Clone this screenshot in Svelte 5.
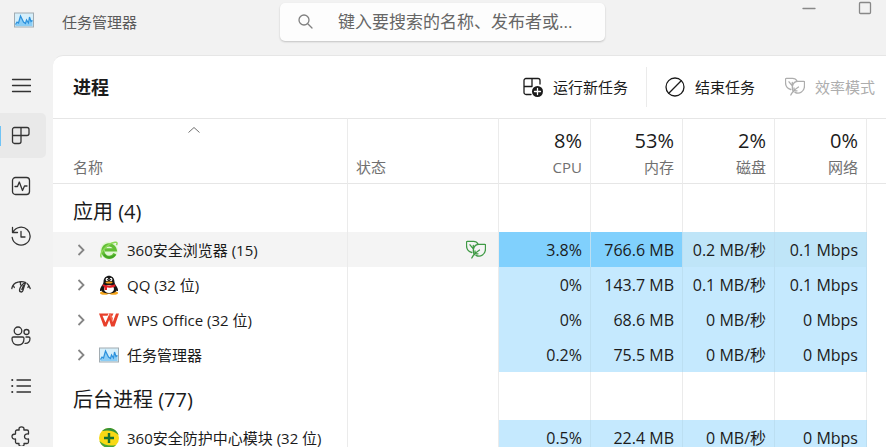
<script>
  let query = $state('');
  let activePage = $state('processes');

  const pages = [
    { id: 'processes', label: '进程' },
    { id: 'performance', label: '性能' },
    { id: 'history', label: '应用历史记录' },
    { id: 'startup', label: '启动应用' },
    { id: 'users', label: '用户' },
    { id: 'details', label: '详细信息' },
    { id: 'services', label: '服务' }
  ];

  const totals = [
    { label: 'CPU', value: '8%' },
    { label: '内存', value: '53%' },
    { label: '磁盘', value: '2%' },
    { label: '网络', value: '0%' }
  ];

  const groups = [
    {
      title: '应用 (4)',
      rows: [
        {
          icon: 'browser',
          name: '360安全浏览器 (15)',
          efficient: true,
          hovered: true,
          usage: ['3.8%', '766.6 MB', '0.2 MB/秒', '0.1 Mbps'],
          heat: ['high', 'high', 'low', 'low']
        },
        { icon: 'qq', name: 'QQ (32 位)', usage: ['0%', '143.7 MB', '0.1 MB/秒', '0.1 Mbps'] },
        { icon: 'wps', name: 'WPS Office (32 位)', usage: ['0%', '68.6 MB', '0 MB/秒', '0 Mbps'] },
        { icon: 'taskmgr', name: '任务管理器', usage: ['0.2%', '75.5 MB', '0 MB/秒', '0 Mbps'] }
      ]
    },
    {
      title: '后台进程 (77)',
      rows: [
        {
          icon: 'shield',
          name: '360安全防护中心模块 (32 位)',
          single: true,
          usage: ['0.5%', '22.4 MB', '0 MB/秒', '0 Mbps']
        }
      ]
    }
  ];
</script>

{#snippet leaf()}
  <svg class="icon" viewBox="0 0 20 20" aria-hidden="true">
    <path d="M5.800 12.500C2 11.500.5 8.500.5 5.500V2.200c0-.5.3-.8.8-.8h6.200c2 0 3.600.8 4.500 2.600" />
    <path d="M8.300 14.600C6.600 11.500 6.800 4.300 13 4.300h5.700c.5 0 .8.300.8.800v3.400c0 6-5 9.200-9.500 6.900" />
    <path d="M5.800 18c1.500-3.200 4-5.600 7.700-8M4 4.800l3.300 4M7.300 5.500v3.300M9 11v2.800h3" />
  </svg>
{/snippet}

{#snippet appIcon(kind)}
  <svg class="app-icon" viewBox="0 0 20 20" aria-hidden="true">
    {#if kind === 'browser'}
      <circle cx="10" cy="10.500" r="9" fill="#e2f6d5" />
      <path d="M15.800 13.600A6.200 6.200 0 1 1 16.200 9.800H6" fill="none" stroke="#62bf35" stroke-width="3.200" />
      <path d="M5 14.500c2.500 4 8 4 11 .3" fill="none" stroke="#43a526" stroke-width="2" />
      <path d="M2.500 17.500C-.5 14 8 3.500 16 2.200c2.500-.4 2.300 1.300 1.500 3" fill="none" stroke="#8bd956" stroke-width="1.500" />
    {:else if kind === 'qq'}
      <ellipse cx="5.500" cy="18" rx="4.500" ry="1.800" fill="#f6a51b" />
      <ellipse cx="14.500" cy="18" rx="4.500" ry="1.800" fill="#f6a51b" />
      <path d="M4.500 7C4.500-1.500 15.500-1.500 15.500 7c0 2 1.500 3 3 6 1 2.500.5 4-1 2.500-1 4-14 4-15 0C1 17 .5 15.500 1.500 13c1.500-3 3-4 3-6z" fill="#171717" />
      <ellipse cx="10" cy="14" rx="5" ry="4" fill="#fff" />
      <ellipse cx="8" cy="4.500" rx="1.300" ry="1.800" fill="#fff" />
      <ellipse cx="12" cy="4.500" rx="1.300" ry="1.800" fill="#fff" />
      <circle cx="8.400" cy="4.700" r=".6" fill="#111" />
      <circle cx="11.600" cy="4.700" r=".6" fill="#111" />
      <ellipse cx="10" cy="7.500" rx="3.500" ry="1.100" fill="#f6a51b" />
      <path d="M4 9.200c4 1.800 8 1.800 12 0l.6 2c-3 1.500-6 1.700-8.600 1.400V15H5.500v-3.300L3.400 11z" fill="#e52025" />
    {:else if kind === 'wps'}
      <path d="M0 3.500h9.500l-1 2.200H3.500l3 6.800L10.500 3.500h4l-1.200 2.400H12l1.800 6L17 3.500h3L15.500 16.500h-3.300L10.200 10 7.500 16.500H4.800z" fill="#e8402b" />
      <path d="M9.500 3.500h2L14 8.500l-1 3z" fill="#f4674f" />
    {:else if kind === 'shield'}
      <circle cx="10" cy="10" r="10" fill="#f7d915" />
      <path d="M3 3C8-2 17-.5 19.500 7 15 2.500 9 1.800 3 3z" fill="#35933a" />
      <path d="M17 17C12 22 3 20.500.5 13 5 17.500 11 18.200 17 17z" fill="#45a33c" />
      <path d="M8.800 5h2.400v3.800H15v2.400h-3.800V15H8.800v-3.800H5V8.800h3.800z" fill="#157030" />
    {:else}
      <rect x=".5" y="3" width="19" height="14" fill="#d5effb" stroke="#a2acb2" />
      <path d="M1.500 14.500 3 12l1.500 1L6.500 6l3 6 2 1.500 1-3.500 2 3L15.500 7l1.500 4.500 1.500-1V16h-17z" fill="#8bcdf5" />
      <path d="M1.500 14.500 3 12l1.500 1L6.500 6l3 6 2 1.500 1-3.500 2 3L15.500 7l1.500 4.500 1.500-1" fill="none" stroke="#2b91dc" stroke-width="1.200" />
    {/if}
  </svg>
{/snippet}

{#snippet pageIcon(id)}
  <svg class="icon" viewBox="0 0 20 20" aria-hidden="true">
    {#if id === 'processes'}
      <path d="M3.500 1.500H16a2 2 0 0 1 2 2v4a2 2 0 0 1-2 2H10v6a2 2 0 0 1-2 2H3.500a2 2 0 0 1-2-2v-12a2 2 0 0 1 2-2zM10 1.500v8M1.500 9.500H10" />
    {:else if id === 'performance'}
      <rect x="1.500" y="1.500" width="17" height="17" rx="3" />
      <path d="M4 10.500h2.500L8.300 6l3.200 8.500 2-4.500H16" />
    {:else if id === 'history'}
      <path d="M1.500 1.500v5h5M2 6.200A9 9 0 1 1 1.200 11.500M10 5.500v5.500h4" />
    {:else if id === 'startup'}
      <path d="M.8 12.500C1.500 9 4 6.800 7 6.200M3.300 11.500 2.300 9.500M8 6c2.300-.6 4.600-.3 6.700.6M19.200 12.500c-.5-2.300-1.700-3.800-3.200-5M16.900 11.500l1-2" />
      <path d="M14.500 6.500c-3.200 1.500-5.200 4-5.900 7-.5 2.800 2.800 3.400 3.400.9.500-2.300 1.500-4.800 2.500-7.900zM9.500 6.200v2.600M12.500 9.500l-1.700 4" />
    {:else if id === 'users'}
      <circle cx="7" cy="4.800" r="3.800" />
      <circle cx="15.500" cy="6" r="2.500" />
      <path d="M2.500 11h9c1 0 1.500.6 1.500 1.500 0 4-2.200 6.500-6 6.500S1 16.500 1 12.500c0-.9.500-1.500 1.500-1.500zM15 11h2.500c1 0 1.500.5 1.500 1.500 0 3.200-2 5.200-5 4.900" />
    {:else if id === 'details'}
      <path d="M6 4h13.500M6 10h13.500M6 16h13.500" />
      <path class="dots" d="M1.200 4h.1M1.200 10h.1M1.200 16h.1" />
    {:else}
      <path d="M6 4h2.200C7.500 1.600 9 .8 10.500.8S13.500 1.600 12.800 4H16a1.500 1.500 0 0 1 1.500 1.500V8c-3-.5-4 1-4 2.500s1 3 4 2.500v3A1.500 1.500 0 0 1 16 17.500h-3c.5 2.200-1 3-2.500 3s-3-.8-2.500-3H6A1.500 1.500 0 0 1 4.500 16v-3C2 13.300 1 12 1 10.500S2 8 4.500 8V5.500A1.500 1.500 0 0 1 6 4z" />
    {/if}
  </svg>
{/snippet}

<div class="window">
  <header class="titlebar">
    <div class="brand">
      {@render appIcon('taskmgr')}
      <span>任务管理器</span>
    </div>
    <label class="search">
      <svg class="icon" viewBox="0 0 20 20" aria-hidden="true">
        <circle cx="8" cy="8" r="5" />
        <path d="m12 12 4 4" />
      </svg>
      <input type="text" aria-label="搜索" placeholder="键入要搜索的名称、发布者或..." bind:value={query} />
    </label>
    <div class="window-controls">
      <button aria-label="最小化">
        <svg class="icon" viewBox="0 0 20 20"><path d="M4 10.500h12" /></svg>
      </button>
      <button aria-label="最大化">
        <svg class="icon" viewBox="0 0 20 20"><rect x="4.500" y="4.500" width="11" height="11" rx="1" /></svg>
      </button>
    </div>
  </header>

  <div class="body">
    <nav class="sidebar">
      <button aria-label="打开导航">
        <svg class="icon" viewBox="0 0 20 20"><path d="M1.500 3.500h18M1.500 9.500h18M1.500 15.500h18" /></svg>
      </button>
      {#each pages as page}
        <button
          class:active={page.id === activePage}
          aria-label={page.label}
          onclick={() => (activePage = page.id)}
        >
          {@render pageIcon(page.id)}
        </button>
      {/each}
    </nav>

    <main class="panel">
      <div class="toolbar">
        <h1>进程</h1>
        <button class="action">
          <svg class="icon" viewBox="0 0 20 20" aria-hidden="true">
            <path d="M8 17.500H3a2 2 0 0 1-2-2v-12a2 2 0 0 1 2-2h12a2 2 0 0 1 2 2V7M9 1.500v8M1 9.500h8" />
            <circle class="solid" cx="14.500" cy="14.500" r="5.500" />
            <path class="plus" d="M14.500 11.500v6M11.500 14.500h6" />
          </svg>
          运行新任务
        </button>
        <span class="divider"></span>
        <button class="action">
          <svg class="icon" viewBox="0 0 20 20" aria-hidden="true">
            <circle cx="10" cy="10" r="9" />
            <path d="M16.200 3.800 3.800 16.200" />
          </svg>
          结束任务
        </button>
        <button class="action efficiency" disabled>
          {@render leaf()}
          效率模式
        </button>
      </div>

      <table>
        <colgroup>
          <col class="col-name" />
          <col class="col-status" />
          {#each totals as total}
            <col class="col-usage" />
          {/each}
          <col />
        </colgroup>
        <thead>
          <tr>
            <th class="name-head">
              <button class="sort">
                <svg class="caret" viewBox="0 0 12 6" aria-hidden="true"><path d="m.5 5.500 5.500-5 5.500 5" /></svg>
                <span>名称</span>
              </button>
            </th>
            <th>状态</th>
            {#each totals as total}
              <th class="usage">
                <strong>{total.value}</strong>
                {total.label}
              </th>
            {/each}
            <td></td>
          </tr>
        </thead>
        {#each groups as group}
          <tbody>
            <tr class="group">
              <th scope="rowgroup">{group.title}</th>
              <td></td>
              {#each totals as total}
                <td></td>
              {/each}
              <td></td>
            </tr>
            {#each group.rows as row}
              <tr class="process" class:hovered={row.hovered}>
                <td>
                  <div class="process-name">
                    {#if row.single}
                      <span class="expand"></span>
                    {:else}
                      <button class="expand" aria-label="展开">
                        <svg viewBox="0 0 8 12"><path d="m1.500 1 5 5-5 5" /></svg>
                      </button>
                    {/if}
                    {@render appIcon(row.icon)}
                    <span>{row.name}</span>
                  </div>
                </td>
                <td class="status">
                  {#if row.efficient}
                    {@render leaf()}
                  {/if}
                </td>
                {#each row.usage as value, i}
                  <td class="usage {row.heat ? row.heat[i] : 'low'}">{value}</td>
                {/each}
                <td></td>
              </tr>
            {/each}
          </tbody>
        {/each}
      </table>
    </main>
  </div>
</div>

<style>
  :global(body) {
    background: #f2f2f2;
  }

  .window {
    display: flex;
    flex-direction: column;
    height: 100vh;
    overflow: hidden;
    font-family: "Open Sans", "Noto Sans CJK SC", sans-serif;
    font-size: 15px;
    line-height: 20px;
    color: #1b1b1b;
  }

  button {
    display: flex;
    align-items: center;
    padding: 0;
    border: 0;
    background: none;
    font: inherit;
    color: inherit;
  }

  svg {
    flex: none;
    fill: none;
    stroke: currentColor;
  }

  .app-icon {
    width: 20px;
    height: 20px;
    stroke: none;
  }

  .icon {
    width: 20px;
    height: 20px;
    stroke-width: 1.3;
    stroke-linecap: round;
    stroke-linejoin: round;
  }

  .titlebar {
    display: grid;
    grid-template-columns: 280px minmax(120px, 325px) 1fr;
    flex: none;
    height: 55px;
    color: #5a5a5a;
  }

  .brand {
    display: flex;
    align-items: center;
    gap: 28px;
    height: 44px;
    padding-left: 14px;
  }

  .brand .app-icon {
    margin-top: -4px;
  }

  .search {
    display: flex;
    align-items: center;
    gap: 22px;
    height: 38px;
    margin-top: 3px;
    padding: 0 16px;
    box-sizing: border-box;
    border-radius: 5px;
    background: #fdfdfd;
    box-shadow: 0 1px 2px rgba(0, 0, 0, 0.2);
  }

  .search .icon {
    color: #808080;
  }

  .search input {
    flex: 1;
    min-width: 0;
    padding: 0;
    border: 0;
    outline: 0;
    background: none;
    font: inherit;
    font-size: 17px;
    color: #1b1b1b;
  }

  .search input::placeholder {
    color: #666;
    opacity: 1;
  }

  .window-controls {
    display: flex;
    align-items: flex-start;
    justify-content: flex-end;
    gap: 36px;
    padding-right: 11px;
    color: #888;
  }

  .window-controls button {
    height: 16px;
  }

  .body {
    display: flex;
    flex: 1;
    min-height: 0;
  }

  .sidebar {
    display: flex;
    flex: none;
    flex-direction: column;
    gap: 5px;
    width: 53px;
    padding-top: 8px;
    box-sizing: border-box;
    color: #333;
  }

  .sidebar button {
    position: relative;
    flex: none;
    width: 46px;
    height: 45px;
    padding-left: 11px;
    border-radius: 0 5px 5px 0;
  }

  .sidebar .active {
    background: #e9e9e9;
  }

  .sidebar .active::before {
    content: "";
    position: absolute;
    left: 0;
    width: 1px;
    height: 20px;
    background: #6fc3f5;
  }

  .dots {
    stroke-width: 2;
  }

  .panel {
    flex: 1;
    min-width: 0;
    overflow: hidden;
    border-top: 1px solid #e6e6e6;
    border-top-left-radius: 10px;
    background: #fff;
  }

  .toolbar {
    display: flex;
    align-items: center;
    height: 62px;
    padding: 0 11px 0 20px;
  }

  h1 {
    margin: 0 auto 0 0;
    font-size: 18px;
    font-weight: 700;
  }

  .action {
    gap: 10px;
    white-space: nowrap;
  }

  .action:disabled {
    color: #adadad;
  }

  .efficiency {
    margin-left: 30px;
  }

  .solid {
    fill: #1b1b1b;
    stroke: none;
  }

  .plus {
    stroke: #fff;
  }

  .divider {
    width: 1px;
    height: 40px;
    margin: 0 18px;
    background: #ebebeb;
  }

  table {
    width: 100%;
    table-layout: fixed;
    border-collapse: separate;
    border-spacing: 0;
    white-space: nowrap;
  }

  .col-name {
    width: 295px;
  }

  .col-status {
    width: 151px;
  }

  .col-usage {
    width: 92px;
  }

  th,
  td {
    padding: 0 8px;
    box-sizing: border-box;
    border-right: 1px solid #ebebeb;
    font-weight: 400;
    text-align: left;
  }

  tr > :last-child {
    border-right: 0;
  }

  thead th,
  thead td {
    height: 66px;
    padding-bottom: 6px;
    border-top: 1px solid #e6e6e6;
    border-bottom: 1px solid #e6e6e6;
    color: #707070;
    vertical-align: bottom;
  }

  thead strong {
    display: block;
    margin-bottom: 6px;
    font-size: 20px;
    font-weight: 400;
    color: #1b1b1b;
  }

  thead .name-head {
    padding-left: 20px;
  }

  .sort {
    flex-direction: column;
    align-items: flex-start;
    justify-content: space-between;
    width: 100%;
    height: 50px;
  }

  .caret {
    align-self: center;
    width: 12px;
    height: 6px;
    margin-right: 24px;
  }

  .usage {
    text-align: right;
  }

  .group th {
    height: 48px;
    padding: 8px 0 0 20px;
    font-size: 20px;
  }

  .process td {
    height: 35px;
  }

  .process-name {
    display: flex;
    align-items: center;
    gap: 8px;
    padding-left: 16px;
  }

  .expand {
    width: 8px;
    height: 12px;
    margin-right: 6px;
    color: #858585;
    stroke-width: 1.8;
  }

  .expand svg {
    width: 8px;
    height: 12px;
  }

  .status {
    padding-right: 12px;
    text-align: right;
  }

  .status .icon {
    display: block;
    margin-left: auto;
    color: #3f9a45;
  }

  .process .usage {
    border-right-color: #bcdff2;
    font-size: 16px;
  }

  .process .low {
    background: #c5e9fe;
  }

  .process .high {
    background: #80d0fd;
  }

  .hovered td {
    background: #f4f4f4;
  }

  .hovered .low {
    background: #bfe5f8;
  }

  .hovered td:last-child {
    background: #fff;
  }
</style>
